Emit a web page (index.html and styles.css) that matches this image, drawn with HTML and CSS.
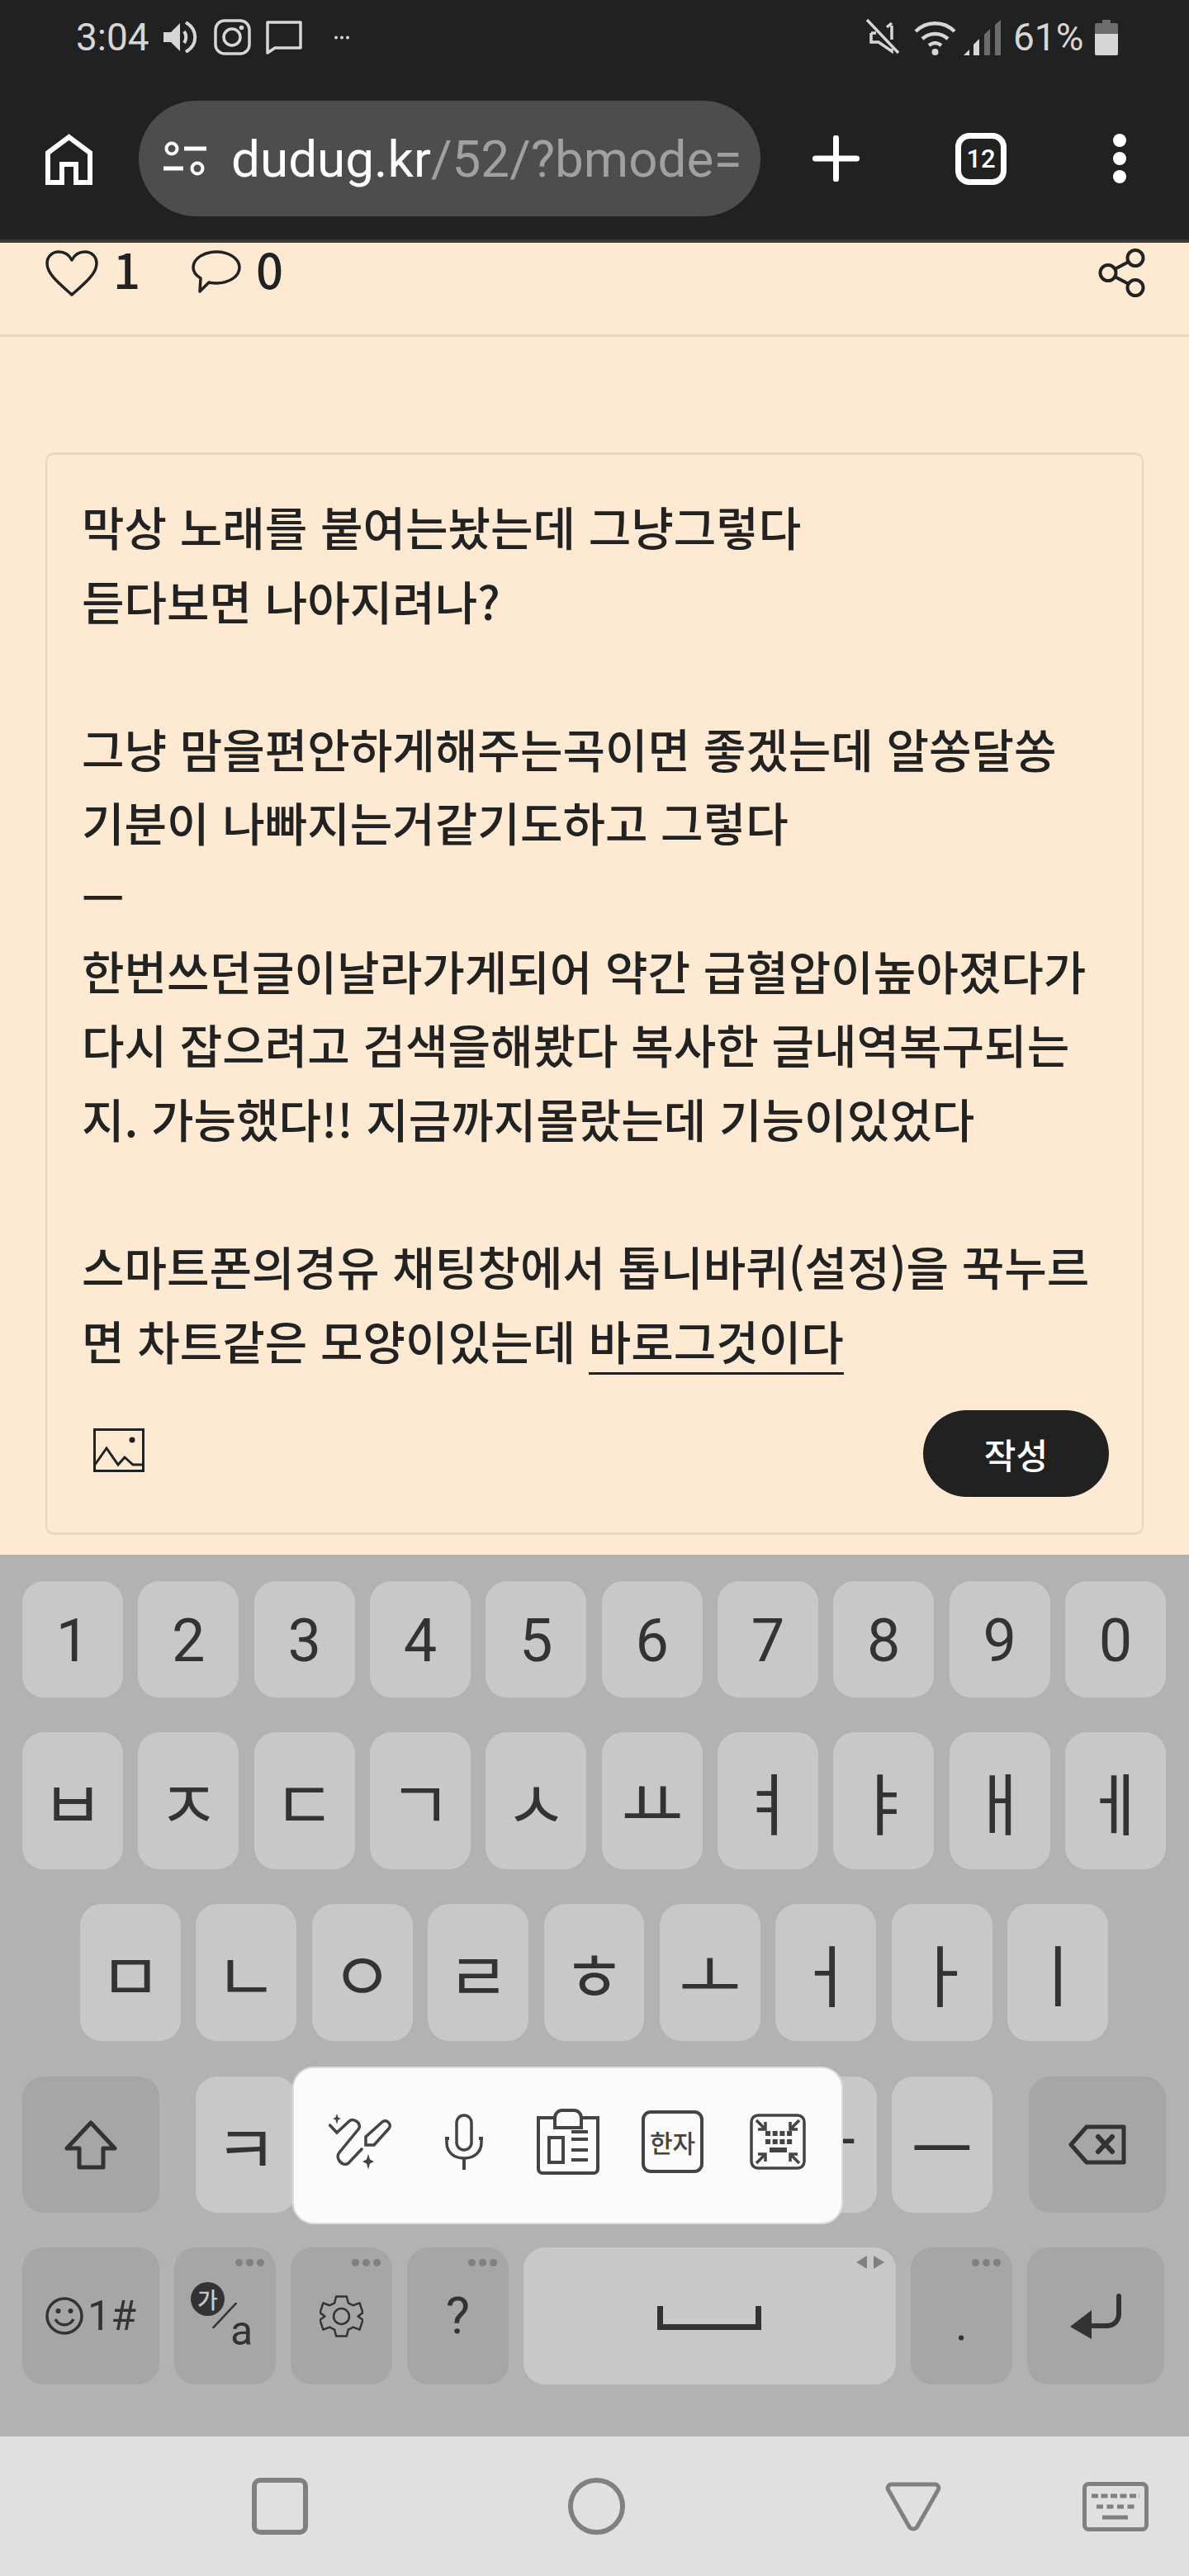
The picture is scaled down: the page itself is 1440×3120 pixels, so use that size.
FILE: index.html
```html
<!DOCTYPE html>
<html lang="ko">
<head>
  <meta charset="UTF-8" />
  <title>dudug.kr</title>
  <link rel="stylesheet" href="styles.css">
</head>
<body>
  <div class="phone">

    <!-- status bar -->
    <div class="status-bar">
      <div class="status-left">
        <span class="status-time">3:04</span>
        <svg class="ic-speaker" viewBox="0 0 41 38"><path d="M0 13h9L20 2v34L9 25H0z" fill="#d6d6d6"/><path d="M25 12c3 4 3 10 0 14" fill="none" stroke="#d6d6d6" stroke-width="4"/><path d="M27 1c15 9 15 27 0 36" fill="none" stroke="#d6d6d6" stroke-width="4"/></svg>
        <svg class="ic-insta" viewBox="0 0 45 44"><rect x="2" y="2" width="41" height="40" rx="11" fill="none" stroke="#d6d6d6" stroke-width="3.5"/><circle cx="22" cy="22" r="10" fill="none" stroke="#d6d6d6" stroke-width="3.5"/><circle cx="33.500" cy="10.500" r="2.800" fill="#d6d6d6"/></svg>
        <svg class="ic-chat" viewBox="0 0 44 42"><path d="M2 2h40v31H11L2 39z" fill="none" stroke="#d6d6d6" stroke-width="3.500" stroke-linejoin="round"/></svg>
        <svg class="ic-more" viewBox="0 0 18 5"><circle cx="2" cy="2.500" r="2" fill="#d6d6d6"/><circle cx="9" cy="2.500" r="2" fill="#d6d6d6"/><circle cx="16" cy="2.500" r="2" fill="#d6d6d6"/></svg>
      </div>
      <div class="status-right">
        <svg class="ic-mute" viewBox="0 0 40 42"><path d="M1 1l38 40" stroke="#d6d6d6" stroke-width="3.500"/><path d="M31 8v17M25 10l6-5M6 17v11h9l16 11v-3M6 17h6" fill="none" stroke="#d6d6d6" stroke-width="3.500"/></svg>
        <svg class="ic-wifi" viewBox="0 0 51 43"><path d="M2 14c13-13 34-13 47 0M10 23c9-8 22-8 31 0M18 31c5-4 10-4 15 0" fill="none" stroke="#d6d6d6" stroke-width="4.500"/><circle cx="25.500" cy="39" r="4" fill="#d6d6d6"/></svg>
        <svg class="ic-signal" viewBox="0 0 45 43"><path d="M0 43l7-7v7z" fill="#d6d6d6"/><path d="M12 43V30l7-7v20z" fill="#d6d6d6"/><path d="M25 43V18l7-7v32z" fill="#6c6c6c"/><path d="M38 43V6l7-6v43z" fill="#6c6c6c"/></svg>
        <span class="status-pct">61%</span>
        <svg class="ic-battery" viewBox="0 0 28 43"><path d="M9 0h10v4h7a2 2 0 0 1 2 2v12H0V6a2 2 0 0 1 2-2h7z" fill="#6c6c6c"/><path d="M0 17h28v24a2 2 0 0 1-2 2H2a2 2 0 0 1-2-2z" fill="#d6d6d6"/></svg>
      </div>
    </div>

    <!-- browser toolbar -->
    <div class="toolbar">
      <svg class="ic-home" viewBox="0 0 57 62"><path d="M3 59V23L28.500 4 54 23v36H37V37H20v22z" fill="none" stroke="#fff" stroke-width="6"/></svg>
      <div class="url-pill">
        <svg class="ic-site" viewBox="0 0 52 42"><circle cx="10" cy="9" r="6.500" fill="none" stroke="#fff" stroke-width="4"/><path d="M25 9h27" stroke="#fff" stroke-width="5"/><path d="M0 33h24" stroke="#fff" stroke-width="5"/><circle cx="41" cy="33" r="6.500" fill="none" stroke="#fff" stroke-width="4"/></svg>
        <span class="url-text"><span class="url-host">dudug.kr</span>/52/?bmode=</span>
      </div>
      <svg class="ic-plus" viewBox="0 0 57 56"><path d="M3.500 28h50M28.500 3v50" stroke="#fff" stroke-width="7" stroke-linecap="round"/></svg>
      <div class="tab-count">12</div>
      <div class="menu-dots"><span></span><span></span><span></span></div>
    </div>
    <div class="toolbar-line"></div>

    <!-- page -->
    <div class="page">
      <div class="post-actions">
        <svg class="ic-heart" viewBox="0 0 64 56"><path d="M32 54C20 43 2 30 2 16 2 8 8 2 16 2c7 0 13 4 16 10C35 6 41 2 48 2c8 0 14 6 14 14 0 14-18 27-30 38z" fill="none" stroke="#222" stroke-width="3.500" stroke-linejoin="round"/></svg>
        <span class="count">1</span>
        <svg class="ic-comment" viewBox="0 0 60 52"><path d="M30 2c15 0 28 8 28 19S45 40 30 40c-3 0-6 0-9 -1L10 50l1-16C6 31 2 26 2 21 2 10 15 2 30 2z" fill="none" stroke="#222" stroke-width="3.500" stroke-linejoin="round"/></svg>
        <span class="count">0</span>
        <svg class="ic-share" viewBox="0 0 57 59"><circle cx="12" cy="29.500" r="9.500" fill="none" stroke="#222" stroke-width="4"/><circle cx="45" cy="11.500" r="9.500" fill="none" stroke="#222" stroke-width="4"/><circle cx="45" cy="47.500" r="9.500" fill="none" stroke="#222" stroke-width="4"/><path d="M20 25l17-9M20 34l17 9" stroke="#222" stroke-width="4"/></svg>
      </div>

      <div class="comment-box">
        <div class="comment-text">
          <p>막상 노래를 붙여는놨는데 그냥그렇다</p>
          <p>듣다보면 나아지려나?</p>
          <p>&nbsp;</p>
          <p>그냥 맘을편안하게해주는곡이면 좋겠는데 알쏭달쏭</p>
          <p>기분이 나빠지는거같기도하고 그렇다</p>
          <p>ㅡ</p>
          <p>한번쓰던글이날라가게되어 약간 급혈압이높아졌다가</p>
          <p>다시 잡으려고 검색을해봤다 복사한 글내역복구되는</p>
          <p>지. 가능했다!! 지금까지몰랐는데 기능이있었다</p>
          <p>&nbsp;</p>
          <p>스마트폰의경유 채팅창에서 톱니바퀴(설정)을 꾹누르</p>
          <p>면 차트같은 모양이있는데 <span class="composing">바로그것이다</span></p>
        </div>
        <div class="comment-foot">
          <svg class="ic-image" viewBox="0 0 62 53"><rect x="1.500" y="1.500" width="59" height="50" fill="none" stroke="#222" stroke-width="3"/><path d="M2 44l14-20 14 20 8-9 10 9 11 0" fill="none" stroke="#222" stroke-width="3"/><circle cx="47" cy="14" r="3.500" fill="#222"/></svg>
          <button class="submit-btn">작성</button>
        </div>
      </div>
    </div>

    <!-- keyboard -->
    <div class="keyboard">
      <div class="key-row row-digits">
        <div class="key digit">1</div><div class="key digit">2</div><div class="key digit">3</div><div class="key digit">4</div><div class="key digit">5</div>
        <div class="key digit">6</div><div class="key digit">7</div><div class="key digit">8</div><div class="key digit">9</div><div class="key digit">0</div>
      </div>
      <div class="key-row row-top">
        <div class="key">ㅂ</div><div class="key">ㅈ</div><div class="key">ㄷ</div><div class="key">ㄱ</div><div class="key">ㅅ</div>
        <div class="key">ㅛ</div><div class="key">ㅕ</div><div class="key">ㅑ</div><div class="key">ㅐ</div><div class="key">ㅔ</div>
      </div>
      <div class="key-row row-home">
        <div class="key">ㅁ</div><div class="key">ㄴ</div><div class="key">ㅇ</div><div class="key">ㄹ</div><div class="key">ㅎ</div>
        <div class="key">ㅗ</div><div class="key">ㅓ</div><div class="key">ㅏ</div><div class="key">ㅣ</div>
      </div>
      <div class="key-row row-bottom">
        <div class="key fn shift">
          <svg class="ic-shift" viewBox="0 0 64 60"><path d="M32 3l29 31H47v23H18V34H3z" fill="none" stroke="#333" stroke-width="5" stroke-linejoin="round"/></svg>
        </div>
        <div class="letters">
          <div class="key">ㅋ</div><div class="key"></div><div class="key"></div><div class="key"></div><div class="key"></div><div class="key">ㅜ</div><div class="key">ㅡ</div>
        </div>
        <div class="key fn backspace">
          <svg class="ic-backspace" viewBox="0 0 70 49"><path d="M22 3h45v43H22L3 24.500z" fill="none" stroke="#333" stroke-width="5" stroke-linejoin="round"/><path d="M36 15l17 18M53 15L36 33" stroke="#333" stroke-width="6" stroke-linecap="round"/></svg>
        </div>
      </div>
      <div class="key-row row-space">
        <div class="key fn sym">
          <svg class="ic-smile" viewBox="0 0 46 46"><circle cx="23" cy="23" r="21" fill="none" stroke="#333" stroke-width="3.500"/><circle cx="15.500" cy="17" r="3" fill="#333"/><circle cx="30.500" cy="17" r="3" fill="#333"/><path d="M12 27c5 9 17 9 22 0" fill="none" stroke="#333" stroke-width="3.500"/></svg>
          <span class="sym-label">1#</span>
        </div>
        <div class="key fn small lang">
          <span class="lang-dot">가</span>
          <svg class="ic-slash" viewBox="0 0 30 31"><path d="M0.500 31L29.500 0" stroke="#333" stroke-width="2.500"/></svg>
          <span class="lang-a">a</span>
          <span class="more"><i></i><i></i><i></i></span>
        </div>
        <div class="key fn small">
          <svg class="ic-gear" viewBox="0 0 53 53"><path d="M20 2h13l2 8 6 3 8-3 4 12-6 4.500 6 4.500-4 12-8-3-6 3-2 8H20l-2-8-6-3-8 3-4-12 6-4.500L0 22l4-12 8 3 6-3z" fill="none" stroke="#333" stroke-width="2.500" stroke-linejoin="round" transform="translate(.5 .5) scale(.98)"/><circle cx="26.500" cy="26.500" r="9.500" fill="none" stroke="#333" stroke-width="2.500"/></svg>
          <span class="more"><i></i><i></i><i></i></span>
        </div>
        <div class="key fn small question">?<span class="more"><i></i><i></i><i></i></span></div>
        <div class="key spacebar">
          <svg class="ic-space" viewBox="0 0 126 29"><path d="M3.500 0v25.500h119V0" fill="none" stroke="#333" stroke-width="7"/></svg>
          <svg class="ic-arrows" viewBox="0 0 34 16"><path d="M13 0v16L0 8zM21 0v16l13-8z" fill="#808080"/></svg>
        </div>
        <div class="key fn small period">.<span class="more"><i></i><i></i><i></i></span></div>
        <div class="key fn enter">
          <svg class="ic-enter" viewBox="0 0 63 55"><path d="M59 3v21c0 9-6 15-15 15H22" fill="none" stroke="#333" stroke-width="6" stroke-linecap="round"/><path d="M26 20v35L0 40z" fill="#333"/></svg>
        </div>
      </div>

      <!-- floating tool strip over the keys -->
      <div class="tool-strip">
        <svg class="ic-tool-ai" viewBox="0 0 76 68"><path d="M1.500 14l8.500 9 15-14c6-5 16 4 11 10L13 47c-6 7 4 18 11 13l16-17" fill="none" stroke="#444" stroke-width="3.500" stroke-linecap="round"/><path d="M45 28v10h10l18-20c4-5-3-12-8-8z" fill="none" stroke="#444" stroke-width="3.500"/><path d="M10 0l1.500 4.500L15 6l-3.500 1.500L10 13 8.500 7.500 5 6l3.500-1.500z" fill="#444"/><path d="M48 49l2 6.500 5 2.500-5 2.500-2 7-2-7-5-2.500 5-2.500z" fill="#444"/></svg>
        <svg class="ic-tool-mic" viewBox="0 0 46 68"><rect x="14" y="2" width="18" height="42" rx="9" fill="none" stroke="#444" stroke-width="3.500"/><path d="M2 29v6c0 12 9 19 21 19s21-7 21-19v-6" fill="none" stroke="#444" stroke-width="3.500"/><path d="M0 30h5M41 30h5" stroke="#444" stroke-width="4"/><path d="M23 54v14" stroke="#444" stroke-width="4"/></svg>
        <svg class="ic-tool-clip" viewBox="0 0 76 80"><path d="M21 11H2v62a5 5 0 0 0 5 5h62a5 5 0 0 0 5-5V11H55" fill="none" stroke="#444" stroke-width="4"/><path d="M22 23V11c0-5 4-9 9-9h14c5 0 9 4 9 9v12z" fill="none" stroke="#444" stroke-width="4"/><rect x="15" y="35" width="17" height="30" fill="none" stroke="#444" stroke-width="4"/><path d="M42 37h20M42 50h20M42 62h20" stroke="#444" stroke-width="4"/><path d="M42 28h20" stroke="#444" stroke-width="4"/></svg>
        <div class="tool-hanja">한자</div>
        <svg class="ic-tool-kb" viewBox="0 0 68 68"><rect x="2" y="2" width="64" height="64" rx="8" fill="none" stroke="#444" stroke-width="3.500"/><path d="M8 8l11 11M19 10v9h-9M60 8L49 19M49 10v9h9M8 60l11-11M19 58v-9h-9M60 60L49 49M49 58v-9h9" fill="none" stroke="#444" stroke-width="3.500"/><path d="M19 24h34M19 34h34" stroke="#444" stroke-width="6" stroke-dasharray="6 2.700"/><path d="M24 44h21" stroke="#444" stroke-width="6"/></svg>
      </div>
    </div>

    <!-- system nav -->
    <div class="nav-bar">
      <div class="nav-square"></div>
      <div class="nav-circle"></div>
      <svg class="ic-back" viewBox="0 0 68 60"><path d="M8 3h52c4 0 6 4 4 7L39 54c-2 4-8 4-10 0L4 10C2 7 4 3 8 3z" fill="none" stroke="#808080" stroke-width="5"/></svg>
      <svg class="ic-kb-hide" viewBox="0 0 80 60"><rect x="2.500" y="2.500" width="75" height="55" rx="5" fill="none" stroke="#808080" stroke-width="5"/><path d="M11 17h58" stroke="#808080" stroke-width="5" stroke-dasharray="8 3.500"/><path d="M17 30h46" stroke="#808080" stroke-width="5" stroke-dasharray="8 4.500"/><path d="M24 43h31" stroke="#808080" stroke-width="5"/></svg>
    </div>
  </div>
</body>
</html>
```

FILE: styles.css
```css
* {
  box-sizing: border-box;
  margin: 0;
  padding: 0;
}

body {
  font-family: "Noto Sans CJK KR", "Noto Sans", sans-serif;
  background-color: #212121;
}

svg {
  display: block;
  flex: none;
}

.phone {
  width: 1440px;
  height: 3120px;
  display: flex;
  flex-direction: column;
  overflow: hidden;
}

/* Status bar */
.status-bar {
  height: 68px;
  flex: none;
  padding: 23px 86px 0 92px;
  display: flex;
  justify-content: space-between;
  align-items: flex-start;
  background-color: #212121;
  color: #d6d6d6;
  font-family: Roboto, sans-serif;
  font-size: 46px;
  line-height: 44px;
}

.status-left,
.status-right {
  display: flex;
  align-items: flex-start;
}

.status-time {
  width: 106px;
}

.ic-speaker { width: 41px; height: 38px; margin-top: 3px; }
.ic-insta { width: 45px; height: 44px; margin-left: 20px; }
.ic-chat { width: 44px; height: 42px; margin-left: 18px; margin-top: 2px; }
.ic-more { width: 18px; height: 5px; margin-left: 39px; margin-top: 20px; }

.ic-mute { width: 40px; height: 42px; }
.ic-wifi { width: 51px; height: 43px; margin-left: 18px; margin-top: 1px; }
.ic-signal { width: 45px; height: 43px; margin-left: 9px; margin-top: 1px; }
.status-pct { margin-left: 15px; width: 84px; }
.ic-battery { width: 28px; height: 43px; margin-left: 15px; margin-top: 1px; }

/* Browser toolbar */
.toolbar {
  height: 222px;
  flex: none;
  padding: 26px 76px 0 55px;
  display: flex;
  align-items: center;
  background-color: #212121;
}

.toolbar-line {
  height: 4px;
  flex: none;
  background-color: #3a3a3a;
}

.ic-home { width: 57px; height: 62px; margin-top: 2px; }

.url-pill {
  width: 753px;
  height: 140px;
  margin-left: 56px;
  padding-left: 30px;
  display: flex;
  align-items: center;
  border-radius: 70px;
  background-color: #4d4d4d;
}

.ic-site { width: 52px; height: 42px; }

.url-text {
  margin-left: 30px;
  font-family: Roboto, sans-serif;
  font-size: 62px;
  color: #a0a0a0;
  white-space: nowrap;
}

.url-host {
  color: #fff;
}

.ic-plus { width: 57px; height: 56px; margin-left: 63px; }

.tab-count {
  width: 62px;
  height: 63px;
  margin-left: 116px;
  display: flex;
  align-items: center;
  justify-content: center;
  border: 7px solid #fff;
  border-radius: 17px;
  color: #fff;
  font-family: Roboto, sans-serif;
  font-size: 31px;
  font-weight: 500;
}

.menu-dots {
  margin-left: 129px;
  display: flex;
  flex-direction: column;
  gap: 6px;
}

.menu-dots span {
  width: 16px;
  height: 16px;
  border-radius: 50%;
  background-color: #fff;
}

/* Page */
.page {
  height: 1589px;
  flex: none;
  background-color: #fee9d3;
  color: #222;
}

.post-actions {
  height: 114px;
  padding: 7px 53px 0 55px;
  display: flex;
  align-items: flex-start;
  border-bottom: 3px solid #e8d6bf;
}

.ic-heart { width: 64px; height: 56px; margin-top: 2px; }
.ic-comment { width: 60px; height: 52px; margin-left: 62px; margin-top: 2px; }
.ic-share { width: 57px; height: 59px; margin-left: auto; }

.count {
  margin-left: 18px;
  margin-top: -7px;
  font-size: 58px;
  font-weight: 500;
  line-height: 62px;
}

.comment-box {
  height: 1311px;
  margin: 140px 55px 0;
  padding: 0 40px 0 42px;
  border: 2px solid #e8d8c3;
  border-top-width: 3px;
  border-bottom-width: 3px;
  border-radius: 10px;
  display: flex;
  flex-direction: column;
}

.comment-text {
  padding-top: 41px;
  font-size: 56px;
  font-weight: 500;
  line-height: 89.6px;
  white-space: nowrap;
}

.composing {
  display: inline-block;
  line-height: 72px;
  padding-bottom: 3px;
  border-bottom: 3px solid #222;
}

.comment-foot {
  margin-top: 41px;
  display: flex;
  justify-content: space-between;
  align-items: center;
}

.ic-image { width: 62px; height: 53px; margin-left: 14px; margin-top: -8px; }

.submit-btn {
  width: 225px;
  height: 105px;
  border: none;
  border-radius: 53px;
  background-color: #212121;
  color: #fff;
  font-family: inherit;
  font-size: 42px;
  font-weight: 500;
}

/* Keyboard */
.keyboard {
  position: relative;
  height: 1068px;
  flex: none;
  padding-top: 32px;
  background-color: #b2b2b2;
  color: #333;
}

.key-row {
  display: flex;
  gap: 18.500px;
  padding: 0 28px 0 27px;
  height: 166px;
  margin-bottom: 42px;
}

.row-digits {
  height: 141px;
}

.row-home {
  padding: 0 98px 0 97px;
}

.row-bottom {
  height: 165px;
  margin-top: 43px;
  gap: 44px;
}

.row-space {
  gap: 18px;
  margin-bottom: 0;
}

.letters {
  flex: 1;
  display: flex;
  gap: 18.500px;
}

.key {
  position: relative;
  flex: 1;
  display: flex;
  align-items: center;
  justify-content: center;
  border-radius: 26px;
  background-color: #c8c8c8;
  font-size: 82px;
  line-height: 1;
}

.digit {
  padding-top: 5px;
  font-family: Roboto, sans-serif;
  font-size: 72px;
}

.fn {
  background-color: #a6a6a6;
}

.shift,
.backspace,
.sym,
.enter {
  flex: none;
  width: 166px;
}

.small {
  flex: none;
  width: 123px;
}

.spacebar {
  flex: none;
  width: 451px;
}

.sym {
  gap: 5px;
}

.sym-label {
  font-family: Roboto, sans-serif;
  font-size: 50px;
}

.ic-shift { width: 64px; height: 60px; }
.ic-backspace { width: 70px; height: 49px; }
.ic-smile { width: 46px; height: 46px; }
.ic-gear { width: 53px; height: 53px; }
.ic-space { width: 126px; height: 29px; margin-right: 2px; margin-top: 5px; }
.ic-enter { width: 63px; height: 55px; margin-top: 1px; }

.ic-arrows {
  position: absolute;
  top: 10px;
  right: 14px;
  width: 34px;
  height: 16px;
}

/* overlays inside the key */
.more {
  position: absolute;
  top: 14px;
  right: 14px;
  display: flex;
  gap: 4px;
}

.more i {
  width: 9px;
  height: 9px;
  border-radius: 50%;
  background-color: #808080;
}

.lang-dot {
  position: absolute;
  top: 42px;
  left: 20px;
  width: 41px;
  height: 41px;
  display: flex;
  align-items: center;
  justify-content: center;
  border-radius: 50%;
  background-color: #333;
  color: #c8c8c8;
  font-size: 27px;
  font-weight: 500;
}

.ic-slash {
  position: absolute;
  top: 67px;
  left: 46px;
  width: 30px;
  height: 31px;
}

.lang-a {
  position: absolute;
  top: 76px;
  left: 68px;
  font-family: Roboto, sans-serif;
  font-size: 50px;
  line-height: 50px;
}

.question {
  font-family: Roboto, sans-serif;
  font-size: 62px;
}

.period {
  padding-top: 20px;
  font-family: Roboto, sans-serif;
  font-size: 56px;
}

/* Floating tool strip */
.tool-strip {
  position: absolute;
  top: 620px;
  left: 354px;
  width: 667px;
  height: 191px;
  padding-bottom: 10px;
  display: flex;
  align-items: center;
  border: 2px solid #dcdcdc;
  border-radius: 26px;
  background-color: #fbfbfb;
}

.ic-tool-ai { width: 76px; height: 68px; margin-left: 42px; }
.ic-tool-mic { width: 46px; height: 68px; margin-left: 65px; }
.ic-tool-clip { width: 76px; height: 80px; margin-left: 65px; }
.ic-tool-kb { width: 68px; height: 68px; margin-left: 56px; }

.tool-hanja {
  width: 75px;
  height: 76px;
  margin-left: 51px;
  display: flex;
  align-items: center;
  justify-content: center;
  border: 4px solid #444;
  border-radius: 11px;
  color: #444;
  font-size: 30px;
  font-weight: 500;
  white-space: nowrap;
}

/* System nav */
.nav-bar {
  flex: 1;
  position: relative;
  display: flex;
  align-items: center;
  padding: 0 49px 0 305px;
  background-color: #e0e0e0;
}

.nav-square {
  width: 68px;
  height: 69px;
  border: 6px solid #808080;
  border-radius: 10px;
}

.nav-circle {
  width: 69px;
  height: 69px;
  margin-left: 315px;
  border: 6px solid #808080;
  border-radius: 50%;
}

.ic-back { width: 68px; height: 60px; margin-left: 315px; }
.ic-kb-hide { width: 80px; height: 60px; margin-left: 171px; }
```
